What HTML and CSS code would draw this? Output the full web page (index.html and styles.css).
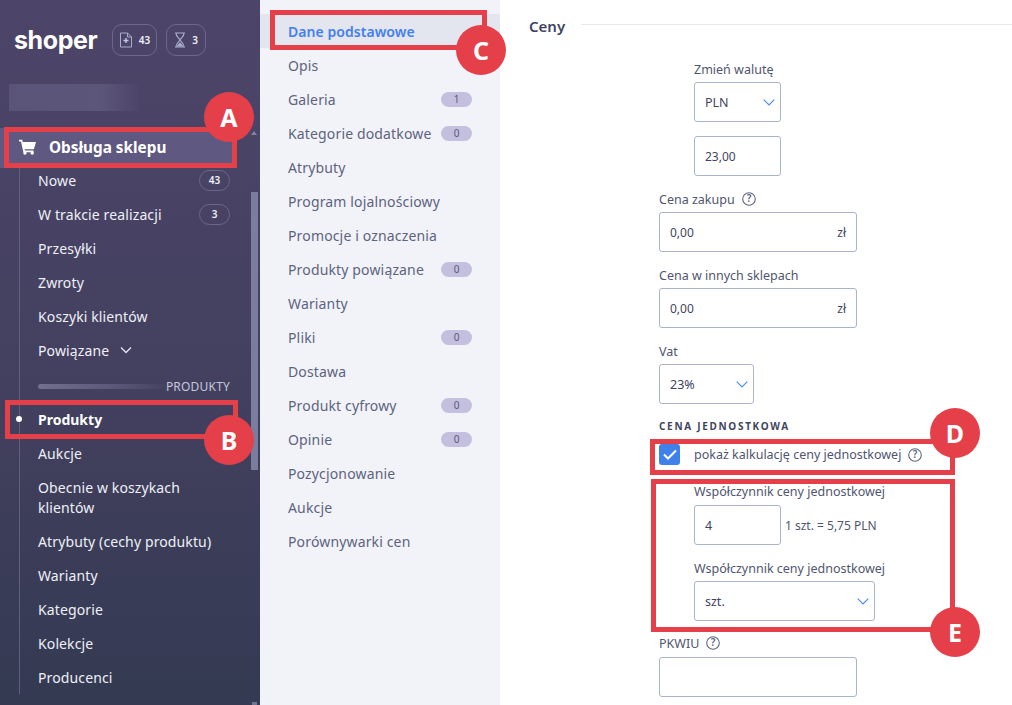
FILE: index.html
```html
<!DOCTYPE html>
<html lang="pl">
<head>
<meta charset="utf-8">
<title>Ceny</title>
<link rel="stylesheet" href="styles.css">
</head>
<body>
<div class="app">
  <aside class="sidebar">
    <div class="brand">
      <span class="logo">shoper</span>
      <span class="pill pill-a">
        <svg width="14" height="16" viewBox="0 0 14 16" fill="none" stroke="#a9adcc" stroke-width="1"><path d="M1.5 1h7l4 4v10h-11z"/><path d="M8.5 1v4h4"/><path d="M7 6v5M4.5 8.5h5" stroke="#c5c8e0" stroke-width="1.4"/></svg>
        <b>43</b>
      </span>
      <span class="pill pill-b">
        <svg width="12" height="16" viewBox="0 0 12 16" fill="none" stroke="#a9adcc" stroke-width="1.1"><path d="M1 1h10M1 15h10M2 1c0 4 3 5 4 7 1-2 4-3 4-7M2 15c0-4 3-5 4-7 1 2 4 3 4 7"/><path d="M3.5 14 6 11l2.500 3z" fill="#a9adcc"/></svg>
        <b>3</b>
      </span>
    </div>
    <div class="blur-name"></div>
    <div class="section-head">
      <svg width="17" height="16" viewBox="0 0 20 18" fill="#fff"><path d="M0 .5h3.800l.7 2.500H20l-2.500 8.500H6.600l.4 1.700h10v2H5.200L2.300 2.500H0z"/><circle cx="7" cy="16" r="2"/><circle cx="15.500" cy="16" r="2"/></svg>
      <span>Obsługa sklepu</span>
    </div>
    <nav class="menu">
      <a class="item">Nowe<span class="count">43</span></a>
      <a class="item">W trakcie realizacji<span class="count">3</span></a>
      <a class="item">Przesyłki</a>
      <a class="item">Zwroty</a>
      <a class="item">Koszyki klientów</a>
      <a class="item">Powiązane
        <svg class="caret" width="12" height="8" viewBox="0 0 12 8" fill="none" stroke="#e4e5f0" stroke-width="1.300"><path d="M1 1.500l5 5 5-5"/></svg>
      </a>
      <div class="divider"><i></i><span>PRODUKTY</span></div>
      <a class="item active">Produkty</a>
      <a class="item">Aukcje</a>
      <a class="item wrap">Obecnie w koszykach<br>klientów</a>
      <a class="item">Atrybuty (cechy produktu)</a>
      <a class="item">Warianty</a>
      <a class="item">Kategorie</a>
      <a class="item">Kolekcje</a>
      <a class="item">Producenci</a>
    </nav>
    <div class="scroll-arrow"></div>
    <div class="scroll-thumb"></div>
    <div class="scroll-end"></div>
  </aside>

  <section class="tabs">
    <a class="tab current">Dane podstawowe</a>
    <a class="tab">Opis</a>
    <a class="tab">Galeria<span class="tag">1</span></a>
    <a class="tab">Kategorie dodatkowe<span class="tag">0</span></a>
    <a class="tab">Atrybuty</a>
    <a class="tab">Program lojalnościowy</a>
    <a class="tab">Promocje i oznaczenia</a>
    <a class="tab">Produkty powiązane<span class="tag">0</span></a>
    <a class="tab">Warianty</a>
    <a class="tab">Pliki<span class="tag">0</span></a>
    <a class="tab">Dostawa</a>
    <a class="tab">Produkt cyfrowy<span class="tag">0</span></a>
    <a class="tab">Opinie<span class="tag">0</span></a>
    <a class="tab">Pozycjonowanie</a>
    <a class="tab">Aukcje</a>
    <a class="tab">Porównywarki cen</a>
  </section>

  <main class="content">
    <header class="content-head"><h2>Ceny</h2><i></i></header>
    <form class="form">
      <div class="indent">
        <label class="lbl">Zmień walutę</label>
        <div class="ctl w87 select"><span>PLN</span><svg width="12" height="7" viewBox="0 0 12 7" fill="none" stroke="#4c8df0" stroke-width="1.200"><path d="M.7.700 6 6l5.300-5.300"/></svg></div>
        <div class="ctl w87 gap14 num">23,00</div>
      </div>
      <div class="field f1">
        <label class="lbl">Cena zakupu <svg class="help" width="14" height="14" viewBox="0 0 14 14"><circle cx="7" cy="7" r="6.300" fill="none" stroke="#5f6782" stroke-width="1.100"/><text x="7" y="10.300" text-anchor="middle" class="qm">?</text></svg></label>
        <div class="ctl w198 suffix"><span class="num">0,00</span><span class="unit">zł</span></div>
      </div>
      <div class="field f2">
        <label class="lbl">Cena w innych sklepach</label>
        <div class="ctl w198 suffix"><span class="num">0,00</span><span class="unit">zł</span></div>
      </div>
      <div class="field f2">
        <label class="lbl">Vat</label>
        <div class="ctl w95 select"><span>23%</span><svg width="12" height="7" viewBox="0 0 12 7" fill="none" stroke="#4c8df0" stroke-width="1.200"><path d="M.7.700 6 6l5.300-5.300"/></svg></div>
      </div>
      <h3 class="subhead">CENA JEDNOSTKOWA</h3>
      <div class="check-row">
        <span class="check"><svg width="14" height="11" viewBox="0 0 14 11" fill="none" stroke="#fff" stroke-width="2"><path d="M1 5.500l4 4 8-8"/></svg></span>
        <span class="check-label">pokaż kalkulację ceny jednostkowej</span>
        <svg class="help" width="14" height="14" viewBox="0 0 14 14"><circle cx="7" cy="7" r="6.300" fill="none" stroke="#5f6782" stroke-width="1.100"/><text x="7" y="10.300" text-anchor="middle" class="qm">?</text></svg>
      </div>
      <div class="indent unit-block">
        <label class="lbl">Współczynnik ceny jednostkowej</label>
        <div class="inline">
          <div class="ctl w87">4</div>
          <span class="calc">1 szt. = 5,75 PLN</span>
        </div>
        <label class="lbl lbl-2">Współczynnik ceny jednostkowej</label>
        <div class="ctl w181 select"><span>szt.</span><svg width="12" height="7" viewBox="0 0 12 7" fill="none" stroke="#4c8df0" stroke-width="1.200"><path d="M.7.700 6 6l5.300-5.300"/></svg></div>
      </div>
      <div class="field f3">
        <label class="lbl">PKWIU <svg class="help" width="14" height="14" viewBox="0 0 14 14"><circle cx="7" cy="7" r="6.300" fill="none" stroke="#5f6782" stroke-width="1.100"/><text x="7" y="10.300" text-anchor="middle" class="qm">?</text></svg></label>
        <div class="ctl w198"></div>
      </div>
    </form>
  </main>
</div>

<div class="mark box-a"></div><div class="mark box-b"></div><div class="mark box-c"></div><div class="mark box-d"></div><div class="mark box-e"></div>
<div class="dot dot-a">A</div><div class="dot dot-b">B</div><div class="dot dot-c">C</div><div class="dot dot-d">D</div><div class="dot dot-e">E</div>
</body>
</html>
```
FILE: styles.css
```css
* { box-sizing: border-box; }
html, body { margin: 0; height: 705px; overflow: hidden; }
body { font-family: "Noto Sans", "Open Sans", sans-serif; font-size: 14px; color: #3f4560; background: #fff; position: relative; }
.app { display: flex; height: 705px; }

.sidebar { width: 260px; flex: none; position: relative; overflow: hidden; color: #eef0f7; background: linear-gradient(180deg, #4d4569 0%, #43405f 55%, #343a52 100%); }
.brand { height: 84px; padding: 24px 0 0 14px; display: flex; align-items: flex-start; }
.logo { font-family: "Inter", sans-serif; font-weight: 700; font-size: 25px; line-height: 32px; letter-spacing: -0.4px; color: #fff; width: 98px; }
.pill { height: 32px; border: 1px solid #6d6889; border-radius: 10px; display: flex; align-items: center; justify-content: center; gap: 6px; }
.pill b { font-size: 10px; font-weight: 600; color: #eef0f7; }
.pill-a { width: 45px; }
.pill-b { width: 40px; margin-left: 9px; }
.blur-name { width: 130px; height: 27px; margin-left: 9px; background: linear-gradient(90deg, #5a5479 0%, #5c5679 70%, #4d4569 100%); }
.section-head { height: 40px; width: 237px; margin-top: 17px; padding: 0 0 2px 19px; background: #5f5880; display: flex; align-items: center; gap: 13px; font-size: 15.300px; font-weight: 700; color: #fff; }
.menu { margin-left: 19px; border-left: 1px solid #5f6080; margin-top: -5px; }
.item { display: flex; align-items: center; height: 34px; padding-left: 18px; width: 210px; font-size: 14px; letter-spacing: 0.12px; color: #eef0f7; position: relative; }
.item.wrap { display: block; height: 54px; line-height: 20px; padding-top: 8px; }
.item.active { font-weight: 700; color: #fff; letter-spacing: 0; }
.item.active::before { content: ""; position: absolute; left: -4px; top: 14px; width: 6px; height: 6px; border-radius: 50%; background: #fff; }
.count { margin-left: auto; width: 31px; height: 21px; border: 1px solid #6d6889; border-radius: 11px; font-size: 10px; font-weight: 600; letter-spacing: 0; display: flex; align-items: center; justify-content: center; color: #eef0f7; }
.caret { margin-left: 11px; }
.divider { height: 35px; display: flex; align-items: center; width: 210px; padding: 3px 0 0 18px; }
.divider i { flex: 1; height: 5px; border-radius: 3px; background: linear-gradient(90deg, #72708f 0%, #5a5878 60%, #44425f 100%); }
.divider span { font-size: 12px; letter-spacing: 0.2px; color: #c4c7da; }
.scroll-arrow { position: absolute; left: 251px; top: 131px; border: 3px solid transparent; border-top: 0; border-bottom: 4px solid #80829f; }
.scroll-thumb { position: absolute; left: 251px; top: 192px; width: 7px; height: 278px; background: #7a7d9c; }
.scroll-end { position: absolute; left: 252px; top: 702px; width: 5px; height: 3px; background: #6f7390; }

.tabs { width: 240px; flex: none; background: #f2f3f8; padding-top: 14px; }
.tab { display: flex; align-items: center; height: 34px; padding: 0 28px; font-size: 14px; letter-spacing: 0.15px; color: #5d637f; }
.tab.current { background: #e3e5ef; color: #4380ec; font-weight: 600; letter-spacing: 0.05px; }
.tag { margin-left: auto; width: 31px; height: 15px; border-radius: 8px; background: #c5bfdf; font-size: 10px; letter-spacing: 0; color: #56597a; display: flex; align-items: center; justify-content: center; }

.content { flex: 1; min-width: 0; padding-left: 29px; }
.content-head { height: 49px; display: flex; align-items: flex-start; padding-top: 15px; gap: 16px; }
.content-head h2 { margin: 0; font-size: 15px; line-height: 22px; font-weight: 600; color: #3f4560; }
.content-head i { flex: 1; height: 1px; background: #e8e9ec; margin-top: 9px; }
.form { margin-left: 130px; display: flex; flex-direction: column; }
.lbl { display: flex; align-items: center; gap: 7px; height: 20px; font-size: 12.500px; color: #50566f; }
.indent { margin-left: 35px; display: flex; flex-direction: column; }
.indent > .lbl:first-child { margin-top: 10px; margin-bottom: 3px; }
.ctl { height: 40px; border: 1px solid #a9b4d0; border-radius: 3px; display: flex; align-items: center; padding: 0 10px; font-size: 12.500px; color: #3f4560; background: #fff; }
.select { justify-content: space-between; padding-right: 5px; }
.suffix { justify-content: space-between; }
.num { font-size: 12px; }
.unit { font-size: 12px; }
.w87 { width: 87px; }
.w95 { width: 95px; }
.w181 { width: 181px; }
.w198 { width: 198px; }
.gap14 { margin-top: 14px; }
.field { display: flex; flex-direction: column; }
.field .lbl { margin-bottom: 3px; }
.f1 { margin-top: 13px; }
.f2 { margin-top: 13px; }
.f3 { margin-top: 12px; }
.f3 .lbl { margin-bottom: 4px; }
.help { flex: none; }
.qm { font-size: 10px; font-weight: 600; fill: #5f6782; }
.subhead { margin: 14px 0 0; height: 16px; font-size: 10px; line-height: 16px; font-weight: 700; letter-spacing: 1.700px; color: #3f4560; }
.check-row { display: flex; align-items: center; margin-top: 10px; height: 21px; }
.check { width: 21px; height: 21px; background: #3f80ea; border-radius: 3px; display: flex; align-items: center; justify-content: center; flex: none; }
.check-label { margin-left: 14px; font-size: 12.500px; margin-right: 7px; color: #50566f; white-space: nowrap; }
.unit-block { margin-top: 16px; }
.unit-block > .lbl:first-child { margin-top: 0; margin-bottom: 4px; }
.inline { display: flex; align-items: center; gap: 4px; }
.calc { font-size: 12px; color: #50566f; white-space: nowrap; }
.lbl-2 { margin-top: 13px; margin-bottom: 3px; }

.mark { position: absolute; border: 5px solid #e5404a; pointer-events: none; }
.box-a { left: 4px; top: 127px; width: 233px; height: 41px; }
.box-b { left: 5px; top: 400px; width: 233px; height: 39px; }
.box-c { left: 270px; top: 10px; width: 217px; height: 40px; }
.box-d { left: 650px; top: 439px; width: 305px; height: 36px; }
.box-e { left: 651px; top: 479px; width: 304px; height: 153px; }
.dot { position: absolute; width: 50px; height: 50px; border-radius: 50%; background: #e5404a; color: #fff; font-size: 25px; font-weight: 700; display: flex; align-items: center; justify-content: center; }
.dot-a { left: 204px; top: 92px; }
.dot-b { left: 204px; top: 415px; }
.dot-c { left: 456px; top: 25px; }
.dot-d { left: 930px; top: 408px; }
.dot-e { left: 930px; top: 607px; }
```
